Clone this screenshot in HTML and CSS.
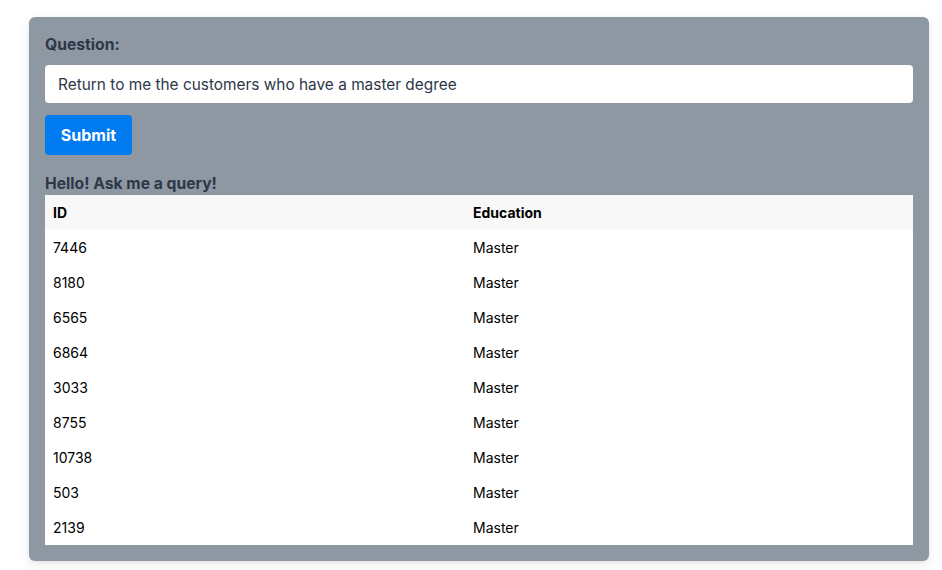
FILE: index.html
```html
<!DOCTYPE html>
<html lang="en">
<head>
<meta charset="utf-8">
<title>Query</title>
<link rel="stylesheet" href="styles.css">
</head>
<body>
<div class="page">
  <div class="card">
    <label class="label" for="q">Question:</label>
    <input id="q" class="input" type="text" value="Return to me the customers who have a master degree">
    <button class="btn" type="button">Submit</button>
    <div class="heading">Hello! Ask me a query!</div>
    <table class="table">
      <thead>
        <tr><th class="col-id">ID</th><th>Education</th></tr>
      </thead>
      <tbody>
        <tr><td>7446</td><td>Master</td></tr>
        <tr><td>8180</td><td>Master</td></tr>
        <tr><td>6565</td><td>Master</td></tr>
        <tr><td>6864</td><td>Master</td></tr>
        <tr><td>3033</td><td>Master</td></tr>
        <tr><td>8755</td><td>Master</td></tr>
        <tr><td>10738</td><td>Master</td></tr>
        <tr><td>503</td><td>Master</td></tr>
        <tr><td>2139</td><td>Master</td></tr>
      </tbody>
    </table>
  </div>
</div>
</body>
</html>
```

FILE: styles.css
```css
* { box-sizing: border-box; }
html, body { margin: 0; padding: 0; background: #ffffff; }
body { font-family: Inter, "Noto Sans", "Liberation Sans", sans-serif; }
.page { padding: 17px 13px 9px 29px; }
.card {
  background: #8e98a3;
  border-radius: 6px;
  padding: 16px;
  display: flex;
  flex-direction: column;
  align-items: flex-start;
  box-shadow: 0 4px 12px rgba(0,0,0,0.08), 0 1px 3px rgba(0,0,0,0.06);
}
.label {
  font-size: 15.7px;
  font-weight: 700;
  color: #2d3748;
  line-height: 24px;
  margin-bottom: 8px;
}
.input {
  width: 100%;
  height: 38px;
  border: none;
  border-radius: 4px;
  background: #ffffff;
  padding: 0 12px 0 13px;
  font-family: inherit;
  font-size: 15.4px;
  color: #2d3748;
  outline: none;
  margin: 0 0 12px 0;
}
.btn {
  height: 40px;
  width: 87px;
  border: none;
  border-radius: 4px;
  background: #007bf0;
  color: #ffffff;
  font-family: inherit;
  font-size: 16px;
  font-weight: 700;
  padding: 0;
  margin: 0 0 18px 0;
}
.heading {
  font-size: 15.7px;
  font-weight: 700;
  color: #2d3748;
  line-height: 22px;
}
.table {
  width: 100%;
  border-collapse: collapse;
  background: #ffffff;
  font-size: 14px;
  color: #000000;
}
.table th, .table td {
  height: 35px;
  padding: 0 8px;
  text-align: left;
  vertical-align: middle;
}
.table th { background: #f8f8f8; font-weight: 700; }
.col-id { width: 420px; }
```
